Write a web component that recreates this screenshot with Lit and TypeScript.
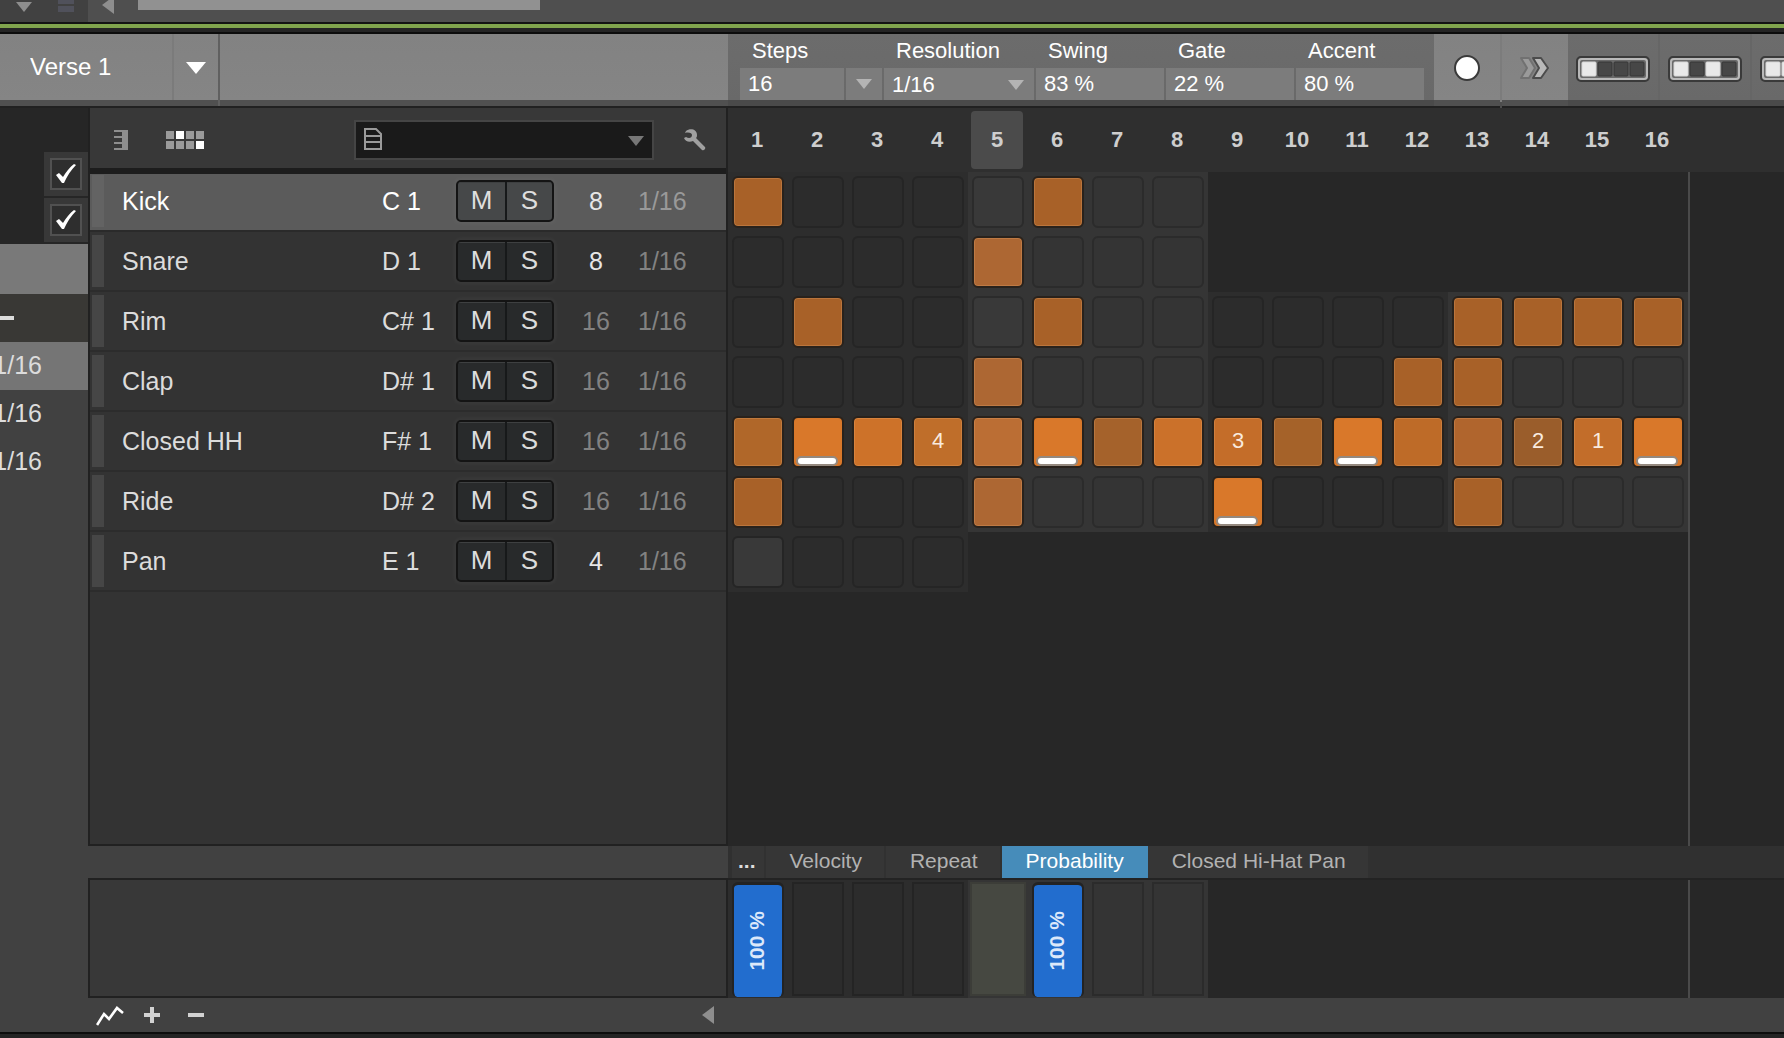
import { LitElement, html, svg, css, nothing } from "lit";
import { customElement, property, state } from "lit/decorators.js";
import { classMap } from "lit/directives/class-map.js";
import { styleMap } from "lit/directives/style-map.js";

interface Hit {
  color?: string;
  accent?: boolean;
  repeat?: number;
}

interface Track {
  name: string;
  note: string;
  steps: number;
  playhead: number;
  hits: Record<number, Hit>;
}

const BASE = "#a86128";
const LIT = "#ad6733";
const ACCENT = "#d9782a";

const TRACKS: Track[] = [
  { name: "Kick", note: "C 1", steps: 8, playhead: 5, hits: { 1: {}, 6: {} } },
  { name: "Snare", note: "D 1", steps: 8, playhead: 5, hits: { 5: { color: LIT } } },
  { name: "Rim", note: "C# 1", steps: 16, playhead: 5, hits: { 2: {}, 6: {}, 13: {}, 14: {}, 15: {}, 16: {} } },
  { name: "Clap", note: "D# 1", steps: 16, playhead: 5, hits: { 5: { color: LIT }, 12: {}, 13: {} } },
  {
    name: "Closed HH",
    note: "F# 1",
    steps: 16,
    playhead: 5,
    hits: {
      1: { color: "#b06729" },
      2: { accent: true },
      3: { color: "#cd7229" },
      4: { color: "#bf6e2a", repeat: 4 },
      5: { color: "#bb6e34" },
      6: { accent: true },
      7: { color: "#a5622b" },
      8: { color: "#cb712a" },
      9: { color: "#c46d29", repeat: 3 },
      10: { color: "#a56229" },
      11: { accent: true },
      12: { color: "#be6b28" },
      13: { color: "#b0652d" },
      14: { color: "#9a5d2b", repeat: 2 },
      15: { color: "#c26d2a", repeat: 1 },
      16: { accent: true },
    },
  },
  { name: "Ride", note: "D# 2", steps: 16, playhead: 5, hits: { 1: {}, 5: { color: LIT }, 9: { accent: true }, 13: {} } },
  { name: "Pan", note: "E 1", steps: 4, playhead: 1, hits: {} },
];

const LANE = [100, null, null, null, null, 100, null, null];

const range = (n: number) => Array.from({ length: n }, (_, i) => i + 1);

const reset = css`
  *,
  *::before,
  *::after {
    box-sizing: border-box;
  }
  button,
  input,
  select {
    appearance: none;
    font: inherit;
    color: inherit;
    background: none;
    border: 0;
    border-radius: 0;
    margin: 0;
    padding: 0;
    outline: none;
  }
  svg {
    display: block;
  }
`;

@customElement("pattern-toolbar")
export class PatternToolbar extends LitElement {
  static styles = [
    reset,
    css`
      :host {
        display: flex;
        height: 74px;
        overflow: hidden;
        color: #fff;
        font-size: 22px;
        background: linear-gradient(#6c6c6c, #696969 66px, #4a4a4a 66px, #4a4a4a 72px, #212121 72px);
      }
      .light {
        background: linear-gradient(#828282, #858585 66px, #505050 66px, #505050 72px, #212121 72px);
      }
      .pattern {
        flex: none;
        display: flex;
        width: 728px;
      }
      .name {
        width: 174px;
        height: 66px;
        padding: 0 30px;
        font-size: 24px;
        border-right: 2px solid #7b7b7b;
      }
      .pick {
        display: grid;
        place-items: center;
        width: 46px;
        height: 72px;
        padding-bottom: 4px;
        border-right: 2px solid #606060;
      }
      .fields {
        flex: none;
        display: flex;
        gap: 2px;
        padding: 0 10px 8px 12px;
      }
      .field {
        display: flex;
        flex-direction: column;
        width: 128px;
      }
      .field.wide {
        width: 150px;
      }
      .field.steps {
        width: 142px;
      }
      label {
        height: 34px;
        line-height: 34px;
        padding-left: 12px;
      }
      .box {
        position: relative;
        display: flex;
        gap: 2px;
        height: 32px;
      }
      .value {
        flex: 1;
        min-width: 0;
        width: 100%;
        height: 32px;
        padding: 0 8px;
        background: #7c7c7c;
      }
      .more {
        display: grid;
        place-items: center;
        width: 36px;
        background: #7c7c7c;
      }
      .over {
        position: absolute;
        right: 10px;
        top: 12px;
        pointer-events: none;
      }
      .tool {
        flex: none;
        display: grid;
        place-items: center;
        width: 66px;
        height: 74px;
        padding-bottom: 6px;
      }
      .tool + .tool {
        width: 68px;
        border-left: 2px solid;
        border-image: linear-gradient(#7c7c7c 66px, #4c4c4c 66px, #4c4c4c 72px, #212121 72px) 2;
      }
      .preset {
        flex: none;
        display: grid;
        place-items: center;
        width: 92px;
        height: 66px;
        padding-top: 4px;
        border-right: 2px solid #666;
      }
    `,
  ];

  private arrow(cls = "") {
    return svg`<svg class=${cls} width="16" height="10" viewBox="0 0 16 10" aria-hidden="true"><path d="M0 0H16L8 10Z" fill="#b4b4b4"/></svg>`;
  }

  private input(label: string, value: string) {
    const id = label.toLowerCase();
    return html`<div class="field">
      <label for=${id}>${label}</label>
      <div class="box"><input class="value" id=${id} .value=${value} /></div>
    </div>`;
  }

  private preset(cells: number[]) {
    return html`<button class="preset" aria-label="Accent preset">
      <svg width="74" height="26" viewBox="0 0 74 26">
        <rect x="1" y="1" width="72" height="24" rx="4" fill="#6a6a6a" stroke="#3a3a3a" stroke-width="2" />
        <rect x="3" y="3" width="68" height="20" rx="3" fill="none" stroke="#b9b9b9" stroke-width="2" />
        ${cells.map(
          (on, i) => svg`<rect x=${6 + i * 16} y="6" width="14" height="14" rx="1"
            fill=${on ? "#e9e9e9" : "#474747"} stroke=${on ? "#d8d8d8" : "#363636"} stroke-width="1"/>`
        )}
      </svg>
    </button>`;
  }

  render() {
    return html`
      <div class="pattern light">
        <input class="name" aria-label="Pattern name" .value=${"Verse 1"} />
        <button class="pick" aria-label="Choose pattern">
          <svg width="20" height="12" viewBox="0 0 20 12"><path d="M0 0H20L10 12Z" fill="#fff" /></svg>
        </button>
      </div>
      <div class="fields">
        <div class="field steps">
          <label for="steps">Steps</label>
          <div class="box">
            <input class="value" id="steps" .value=${"16"} />
            <button class="more" aria-label="Choose step count">${this.arrow()}</button>
          </div>
        </div>
        <div class="field wide">
          <label for="resolution">Resolution</label>
          <div class="box">
            <select class="value" id="resolution"><option>1/16</option></select>
            ${this.arrow("over")}
          </div>
        </div>
        ${this.input("Swing", "83 %")} ${this.input("Gate", "22 %")} ${this.input("Accent", "80 %")}
      </div>
      <button class="tool light" aria-label="Record">
        <svg width="26" height="26" viewBox="0 0 26 26"><circle cx="13" cy="13" r="12" fill="#fff" stroke="#3a3a3a" stroke-width="2" /></svg>
      </button>
      <button class="tool light" aria-label="Follow">
        <svg width="30" height="24" viewBox="0 0 30 24">
          <path d="M1 2H9L15 12L9 22H1L7 12Z" fill="#9a9a9a" stroke="#717171" stroke-width="2" stroke-linejoin="round" />
          <path d="M13 2H21L28 12L21 22H13L19 12Z" fill="#b9b9b9" stroke="#4c4c4c" stroke-width="2" stroke-linejoin="round" />
        </svg>
      </button>
      ${this.preset([1, 0, 0, 0])} ${this.preset([1, 0, 1, 0])} ${this.preset([1, 1, 1, 1])}
    `;
  }
}

@customElement("editor-sidebar")
export class EditorSidebar extends LitElement {
  static styles = [
    reset,
    css`
      :host {
        display: flex;
        flex-direction: column;
        color: #dcdcdc;
        font-size: 25px;
        background: #414141;
      }
      .checks {
        display: flex;
        flex-direction: column;
        align-items: flex-end;
        gap: 2px;
        height: 136px;
        padding-top: 44px;
        background: #262626;
      }
      .check {
        display: grid;
        place-items: center;
        width: 44px;
        height: 44px;
        background: #383838;
      }
      .check > * {
        grid-area: 1 / 1;
      }
      .check input {
        width: 32px;
        height: 32px;
        border: 2px solid #515151;
        background: #2e2e2e;
      }
      .check svg {
        pointer-events: none;
      }
      .band {
        height: 50px;
        background: #797979;
      }
      .minus {
        height: 48px;
        padding-top: 22px;
        background: #393835;
      }
      .dash {
        width: 14px;
        height: 4px;
        background: #dcdcdc;
      }
      .rate {
        display: flex;
        justify-content: flex-end;
        height: 48px;
        line-height: 46px;
        padding-right: 46px;
        overflow: hidden;
      }
      .rate.on {
        background: #757575;
      }
    `,
  ];

  render() {
    return html`
      <div class="checks">
        ${["Monitor", "Follow"].map(
          (l) => html`<label class="check">
            <input type="checkbox" checked aria-label=${l} />
            <svg width="22" height="20" viewBox="0 0 22 20"><path d="M1 11L4 9L8 13C11 8 15 3 19 0L21 1C16 6 12 12 9 19H7Z" fill="#fff" /></svg>
          </label>`
        )}
      </div>
      <div class="band"></div>
      <div class="minus"><div class="dash"></div></div>
      ${[true, false, false].map((on) => html`<div class=${classMap({ rate: true, on })}>1/16</div>`)}
    `;
  }
}

@customElement("track-list")
export class TrackList extends LitElement {
  @property({ type: Number }) selected = 0;

  static styles = [
    reset,
    css`
      :host {
        display: flex;
        flex-direction: column;
        color: #dcdcdc;
        font-size: 25px;
        background: #333;
        border: 2px solid #212121;
        border-top: 0;
      }
      .head {
        display: flex;
        align-items: center;
        height: 66px;
        padding: 0 20px 0 24px;
        background: #383838;
        border-bottom: 6px solid #1d1d1d;
      }
      .mode {
        padding-top: 4px;
      }
      .mode + .mode {
        margin-left: 38px;
      }
      .preset {
        position: relative;
        display: flex;
        width: 300px;
        height: 40px;
        margin-top: 4px;
        margin-left: auto;
        margin-right: 30px;
        border: 2px solid #454545;
        background: #1a1a1a;
      }
      .preset select {
        flex: 1;
      }
      .preset svg {
        position: absolute;
        top: 6px;
        left: 8px;
        pointer-events: none;
      }
      .preset .down {
        top: 14px;
        left: auto;
        right: 8px;
      }
      ul {
        list-style: none;
        margin: 0;
        padding: 0;
      }
      li {
        display: grid;
        grid-template-columns: 12px 1fr 74px 98px 84px 86px;
        align-items: center;
        height: 60px;
        padding: 0 2px;
        border-bottom: 2px solid #2c2c2c;
      }
      li:first-child {
        height: 58px;
        padding-bottom: 2px;
      }
      .stripe {
        height: 52px;
        background: #464646;
      }
      .name {
        padding-left: 18px;
      }
      .ms {
        display: grid;
        grid-template-columns: 1fr 1fr;
        height: 42px;
        border: 2px solid #141414;
        border-radius: 5px;
        background: #282a2b;
        box-shadow: 0 0 4px 2px rgba(255, 255, 255, 0.04);
        overflow: hidden;
        font-size: 26px;
        line-height: 36px;
      }
      .ms button {
        padding-bottom: 2px;
        box-shadow: inset 0 1px #3e4041;
      }
      .ms button + button {
        border-left: 2px solid #17191a;
      }
      .count {
        text-align: center;
        color: #e6e6e6;
      }
      .dim {
        color: #828282;
      }
      .on {
        background: #5b5b5b;
        color: #fff;
        border-bottom-color: #2a2a2a;
      }
      .on .stripe {
        background: #636363;
      }
      .on .ms {
        background: #464849;
        color: #dedede;
      }
      .on .dim {
        color: #999;
      }
    `,
  ];

  render() {
    return html`
      <div class="head">
        <button class="mode" aria-label="Piano view">
          <svg width="14" height="20" viewBox="0 0 14 20" fill="#8e8e8e">
            <path d="M8 0H14V20H8Z" />
            <path d="M0 0H8V2H0ZM0 6H8V8H0ZM0 12H8V14H0ZM0 18H8V20H0Z" />
          </svg>
        </button>
        <button class="mode" aria-label="Drum grid view">
          <svg width="38" height="18" viewBox="0 0 38 18">
            ${range(8).map(
              (n) => svg`<rect x=${((n - 1) % 4) * 10} y=${n > 4 ? 10 : 0} width="8" height="8" fill=${n === 2 || n === 8 ? "#fff" : "#9a9a9a"}/>`
            )}
          </svg>
        </button>
        <div class="preset">
          <select aria-label="Preset"><option></option></select>
          <svg width="18" height="22" viewBox="0 0 18 22" fill="none" stroke="#9a9a9a" stroke-width="2">
            <path d="M1 1H12L17 6V21H1Z" />
            <path d="M1 8H17M1 14H17" />
          </svg>
          <svg class="down" width="16" height="10" viewBox="0 0 16 10"><path d="M0 0H16L8 10Z" fill="#777" /></svg>
        </div>
        <button class="mode" aria-label="Settings">
          <svg width="22" height="22" viewBox="0 0 22 22">
            <path d="M2 2C6 -1 13 0 13 6C13 7 13 8 12 9L21 18C22 20 20 22 18 21L9 12C5 14 1 12 0 9L2 8C5 10 8 9 8 6C8 4 5 3 1 4Z" fill="#a0a0a0" />
          </svg>
        </button>
      </div>
      <ul>
        ${TRACKS.map(
          (t, i) => html`<li class=${classMap({ on: i === this.selected })}>
            <span class="stripe"></span>
            <span class="name">${t.name}</span>
            <span>${t.note}</span>
            <span class="ms">
              <button aria-label="Mute ${t.name}">M</button>
              <button aria-label="Solo ${t.name}">S</button>
            </span>
            <span class=${classMap({ count: true, dim: t.steps === 16 })}>${t.steps}</span>
            <span class="dim">1/16</span>
          </li>`
        )}
      </ul>
    `;
  }
}

@customElement("step-grid")
export class StepGrid extends LitElement {
  static styles = [
    reset,
    css`
      :host {
        display: flex;
        flex-direction: column;
        background: #272727;
      }
      .numbers {
        display: flex;
        height: 64px;
        padding: 3px 0;
        background: #2f2f2f;
        color: #cecece;
        font-size: 22px;
        font-weight: 700;
      }
      .numbers span {
        flex: none;
        width: 52px;
        margin: 0 5px 0 3px;
        line-height: 57px;
        text-align: center;
        border-radius: 4px;
      }
      .numbers .now {
        background: #4b4b4b;
      }
      .rows {
        flex: 1;
        width: 962px;
        border-right: 2px solid #4a4a4a;
      }
      .row {
        display: flex;
      }
      .slot {
        display: flex;
        width: 60px;
        height: 60px;
        padding: 4px;
        background: #2d2d2d;
      }
      .slot.alt {
        background: #353535;
      }
      .step {
        position: relative;
        flex: 1;
        border: 2px solid #252525;
        border-radius: 6px;
        background: #2c2c2c;
        color: #f9eade;
        font-size: 22px;
        padding-bottom: 2px;
      }
      .alt .step {
        border-color: #2b2b2b;
        background: #343434;
      }
      .step.now {
        background: #393939;
      }
      .slot .step.hit {
        border-color: #29221c;
        box-shadow: inset 0 0 0 1px rgba(255, 190, 130, 0.22);
      }
      .slot .step.accent {
        box-shadow: none;
      }
      .step.accent::after {
        content: "";
        position: absolute;
        left: 2px;
        bottom: 0;
        width: 42px;
        height: 10px;
        border: 2px solid #94897f;
        border-radius: 5px;
        background: #fff;
      }
    `,
  ];

  private step(t: Track, n: number) {
    const hit = t.hits[n];
    const color = hit ? (hit.accent ? ACCENT : hit.color ?? BASE) : undefined;
    return html`<div class=${classMap({ slot: true, alt: Math.floor((n - 1) / 4) % 2 === 1 })}>
      <button
        class=${classMap({ step: true, hit: !!hit, accent: !!hit?.accent, now: !hit && n === t.playhead })}
        style=${color ? styleMap({ background: color }) : nothing}
        aria-label="${t.name} step ${n}"
        aria-pressed=${hit ? "true" : "false"}
      >${hit?.repeat ?? nothing}</button>
    </div>`;
  }

  render() {
    return html`
      <div class="numbers">${range(16).map((n) => html`<span class=${classMap({ now: n === 5 })}>${n}</span>`)}</div>
      <div class="rows">
        ${TRACKS.map((t) => html`<div class="row">${range(t.steps).map((n) => this.step(t, n))}</div>`)}
      </div>
    `;
  }
}

@customElement("automation-lane")
export class AutomationLane extends LitElement {
  @state() private tab = "Probability";

  static styles = [
    reset,
    css`
      :host {
        display: grid;
        grid-template-columns: 640px 1fr;
        background: #414141;
      }
      .tabs {
        grid-column: 2;
        display: flex;
        height: 34px;
        padding-left: 4px;
        border-bottom: 2px solid #232323;
        background: #303030;
        color: #b2b2b2;
        font-size: 21px;
      }
      .tabs button {
        flex: none;
        height: 32px;
        padding: 0 22px 2px 24px;
        background: #363636;
        border-right: 2px solid #313131;
      }
      .tabs .dots {
        padding: 0 8px 2px 6px;
        color: #ddd;
        font-weight: 700;
      }
      .tabs .on {
        background: #468cba;
        border-color: #468cba;
        color: #fff;
      }
      .blank {
        height: 120px;
        margin-top: -2px;
        background: #383838;
        border: 2px solid #212121;
      }
      .lane {
        background: #272727;
      }
      .cells {
        display: flex;
        width: 962px;
        height: 118px;
        border-right: 2px solid #4a4a4a;
      }
      .slot {
        display: flex;
        width: 60px;
        padding: 2px 4px;
        background: #2d2d2d;
      }
      .slot.alt {
        background: #353535;
      }
      .cell {
        flex: 1;
        border: 2px solid #242424;
        background: #2c2c2c;
      }
      .alt .cell {
        border-color: #2b2b2b;
        background: #343434;
      }
      .alt .cell.now {
        margin: 0 -2px;
        border: 2px solid #3c3d38;
        background: #464841;
      }
      .slot .cell.full {
        display: grid;
        place-items: center;
        margin-bottom: -1px;
        padding-right: 2px;
        border: 2px solid #232323;
        border-top-width: 3px;
        border-bottom: 0;
        border-radius: 6px 6px 5px 5px;
        background: #226dce;
        background-clip: padding-box;
        color: #dbe8fa;
        font-size: 21px;
        font-weight: 700;
      }
      .cell span {
        writing-mode: vertical-rl;
        transform: rotate(180deg);
      }
      .foot {
        grid-column: 1 / -1;
        display: flex;
        align-items: center;
        height: 34px;
        padding-left: 8px;
      }
      .foot .plus {
        margin-left: 20px;
      }
      .foot .less {
        margin-left: 28px;
      }
      .foot .back {
        margin-left: 498px;
      }
    `,
  ];

  render() {
    return html`
      <div class="tabs">
        <button class="dots" aria-label="More lanes">...</button>
        ${["Velocity", "Repeat", "Probability", "Closed Hi-Hat Pan"].map(
          (t) => html`<button class=${classMap({ on: t === this.tab })} @click=${() => (this.tab = t)}>${t}</button>`
        )}
      </div>
      <div class="blank"></div>
      <div class="lane">
        <div class="cells">
          ${LANE.map(
            (v, i) => html`<div class=${classMap({ slot: true, alt: i >= 4 })}>
              <button class=${classMap({ cell: true, full: v !== null, now: i === 4 })} aria-label="Step ${i + 1} probability">
                ${v !== null ? html`<span>${v} %</span>` : nothing}
              </button>
            </div>`
          )}
        </div>
      </div>
      <div class="foot">
        <button aria-label="Automation">
          <svg width="28" height="22" viewBox="0 0 28 22"><path d="M1 21L8 10L13 15L21 4L27 9" fill="none" stroke="#fff" stroke-width="2.6" /></svg>
        </button>
        <button class="plus" aria-label="Add lane">
          <svg width="16" height="16" viewBox="0 0 16 16"><path d="M6 0H10V6H16V10H10V16H6V10H0V6H6Z" fill="#d2d2d2" /></svg>
        </button>
        <button class="less" aria-label="Remove lane">
          <svg width="16" height="16" viewBox="0 0 16 16"><path d="M0 6H16V10H0Z" fill="#d2d2d2" /></svg>
        </button>
        <button class="back" aria-label="Scroll left">
          <svg width="12" height="18" viewBox="0 0 12 18"><path d="M12 0V18L0 9Z" fill="#8e8e8e" /></svg>
        </button>
      </div>
    `;
  }
}

@customElement("app-root")
export class AppRoot extends LitElement {
  static styles = [
    reset,
    css`
      :host {
        display: flex;
        flex-direction: column;
        min-height: 100vh;
        overflow: hidden;
        background: #242424;
        font-family: "Liberation Sans", Arial, Helvetica, sans-serif;
      }
      .top {
        display: flex;
        height: 22px;
        background: #4f4f4f;
      }
      .corner {
        display: flex;
        gap: 26px;
        width: 88px;
        padding-left: 16px;
        background: #414141;
      }
      .left {
        margin-left: 14px;
      }
      .thumb {
        width: 402px;
        height: 10px;
        margin-left: 24px;
        background: #919191;
      }
      .accent {
        height: 12px;
        border-top: 2px solid #131313;
        border-bottom: 2px solid #0c0c0c;
        background: linear-gradient(#80a44d 4px, #242424 4px);
      }
      .body {
        flex: 1;
        display: grid;
        grid-template-columns: 88px 640px 1fr;
        grid-template-rows: 1fr auto;
        border-bottom: 2px solid #0d0d0d;
        margin-bottom: 4px;
      }
      editor-sidebar {
        grid-row: 1 / 3;
      }
      automation-lane {
        grid-column: 2 / 4;
      }
      track-list,
      step-grid,
      automation-lane {
        min-width: 0;
      }
    `,
  ];

  render() {
    return html`
      <div class="top">
        <div class="corner">
          <svg width="16" height="12" viewBox="0 0 16 12"><path d="M0 2H16L8 12Z" fill="#8e8e8e" /></svg>
          <svg width="16" height="12" viewBox="0 0 16 12"><path d="M0 0H16V4H0ZM0 6H16V12H0Z" fill="#50515b" /></svg>
        </div>
        <svg class="left" width="12" height="14" viewBox="0 0 12 14"><path d="M12 -4V14L0 5Z" fill="#8e8e8e" /></svg>
        <div class="thumb"></div>
      </div>
      <div class="accent"></div>
      <pattern-toolbar></pattern-toolbar>
      <div class="body">
        <editor-sidebar></editor-sidebar>
        <track-list></track-list>
        <step-grid></step-grid>
        <automation-lane></automation-lane>
      </div>
    `;
  }
}
